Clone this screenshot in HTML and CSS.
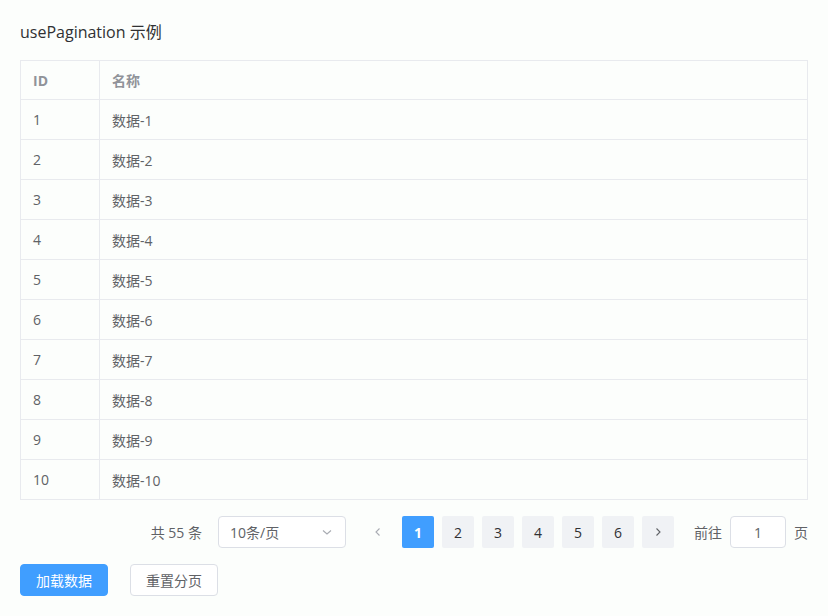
FILE: index.html
```html
<!DOCTYPE html>
<html lang="zh-CN">
<head>
  <meta charset="UTF-8" />
  <meta name="viewport" content="width=device-width, initial-scale=1.0"/>
  <title>usePagination 示例</title>
  <link rel="stylesheet" href="styles.css">
</head>
<body>
<div class="demo">
  <h3 class="title">usePagination 示例</h3>

  <table class="data-table">
    <thead>
      <tr><th class="col-id">ID</th><th>名称</th></tr>
    </thead>
    <tbody>
      <tr><td>1</td><td>数据-1</td></tr>
      <tr><td>2</td><td>数据-2</td></tr>
      <tr><td>3</td><td>数据-3</td></tr>
      <tr><td>4</td><td>数据-4</td></tr>
      <tr><td>5</td><td>数据-5</td></tr>
      <tr><td>6</td><td>数据-6</td></tr>
      <tr><td>7</td><td>数据-7</td></tr>
      <tr><td>8</td><td>数据-8</td></tr>
      <tr><td>9</td><td>数据-9</td></tr>
      <tr><td>10</td><td>数据-10</td></tr>
    </tbody>
  </table>

  <div class="pagination">
    <span class="total">共 55 条</span>
    <div class="size-select">
      <span>10条/页</span>
      <svg class="arrow" viewBox="0 0 12 12" width="12" height="12"><path d="M2 4.5 L6 8 L10 4.5" fill="none" stroke="#a8abb2" stroke-width="1.1"/></svg>
    </div>
    <div class="pager">
      <button class="pg-btn prev" disabled>
        <svg viewBox="0 0 12 12" width="12" height="12"><path d="M7.5 2.5 L4 6 L7.5 9.5" fill="none" stroke="#a8abb2" stroke-width="1.1"/></svg>
      </button>
      <button class="pg-btn active">1</button>
      <button class="pg-btn">2</button>
      <button class="pg-btn">3</button>
      <button class="pg-btn">4</button>
      <button class="pg-btn">5</button>
      <button class="pg-btn">6</button>
      <button class="pg-btn next">
        <svg viewBox="0 0 12 12" width="12" height="12"><path d="M4.5 2.5 L8 6 L4.5 9.5" fill="none" stroke="#606266" stroke-width="1.1"/></svg>
      </button>
    </div>
    <span class="jumper">前往 <input class="jump-input" type="text" value="1" /> 页</span>
  </div>

  <div class="actions">
    <button class="btn btn-primary">加载数据</button>
    <button class="btn">重置分页</button>
  </div>
</div>
</body>
</html>
```

FILE: styles.css
```css
body {
  margin: 0;
  padding: 20px;
  background: #fcfefc;
  font-family: "Open Sans", "Noto Sans CJK SC", sans-serif;
  color: #606266;
}
.title {
  margin: 0 0 16px;
  font-size: 16px;
  line-height: 24px;
  font-weight: normal;
  color: #303133;
}
.data-table {
  width: 100%;
  border-collapse: collapse;
  font-size: 14px;
  background: #fcfefc;
}
.data-table th, .data-table td {
  height: 40px;
  padding: 0 12px;
  border: 1px solid #e8eaee;
  text-align: left;
  box-sizing: border-box;
}
.data-table th {
  height: 39px;
  color: #909399;
  font-weight: bold;
}
.data-table .col-id {
  width: 79px;
}
.pagination {
  display: flex;
  justify-content: flex-end;
  align-items: center;
  margin-top: 16px;
  height: 32px;
  font-size: 14px;
}
.total {
  margin-right: 16px;
}
.size-select {
  width: 128px;
  height: 32px;
  box-sizing: border-box;
  border: 1px solid #dcdfe6;
  border-radius: 4px;
  display: flex;
  align-items: center;
  justify-content: space-between;
  padding: 0 12px 0 11px;
  background: #fff;
  color: #606266;
  margin-right: 16px;
}
.pager {
  display: flex;
  gap: 8px;
}
.pg-btn {
  width: 32px;
  height: 32px;
  border: none;
  border-radius: 2px;
  background: #f0f2f5;
  color: #303133;
  font-family: inherit;
  font-size: 14px;
  padding: 0;
  display: flex;
  align-items: center;
  justify-content: center;
}
.pg-btn.prev {
  background: #fcfefc;
}
.pg-btn.active {
  background: #409eff;
  color: #fff;
  font-weight: bold;
}
.jumper {
  margin-left: 20px;
  display: flex;
  align-items: center;
  gap: 8px;
  color: #606266;
}
.jump-input {
  width: 56px;
  height: 32px;
  box-sizing: border-box;
  border: 1px solid #dcdfe6;
  border-radius: 4px;
  text-align: center;
  font-family: inherit;
  font-size: 14px;
  color: #606266;
  background: #fff;
}
.actions {
  display: flex;
  gap: 22px;
  margin-top: 16px;
}
.btn {
  width: 88px;
  height: 32px;
  border: 1px solid #dcdfe6;
  border-radius: 4px;
  background: #fff;
  color: #606266;
  font-family: inherit;
  font-size: 14px;
  cursor: pointer;
}
.btn-primary {
  background: #409eff;
  border-color: #409eff;
  color: #fff;
}
```
